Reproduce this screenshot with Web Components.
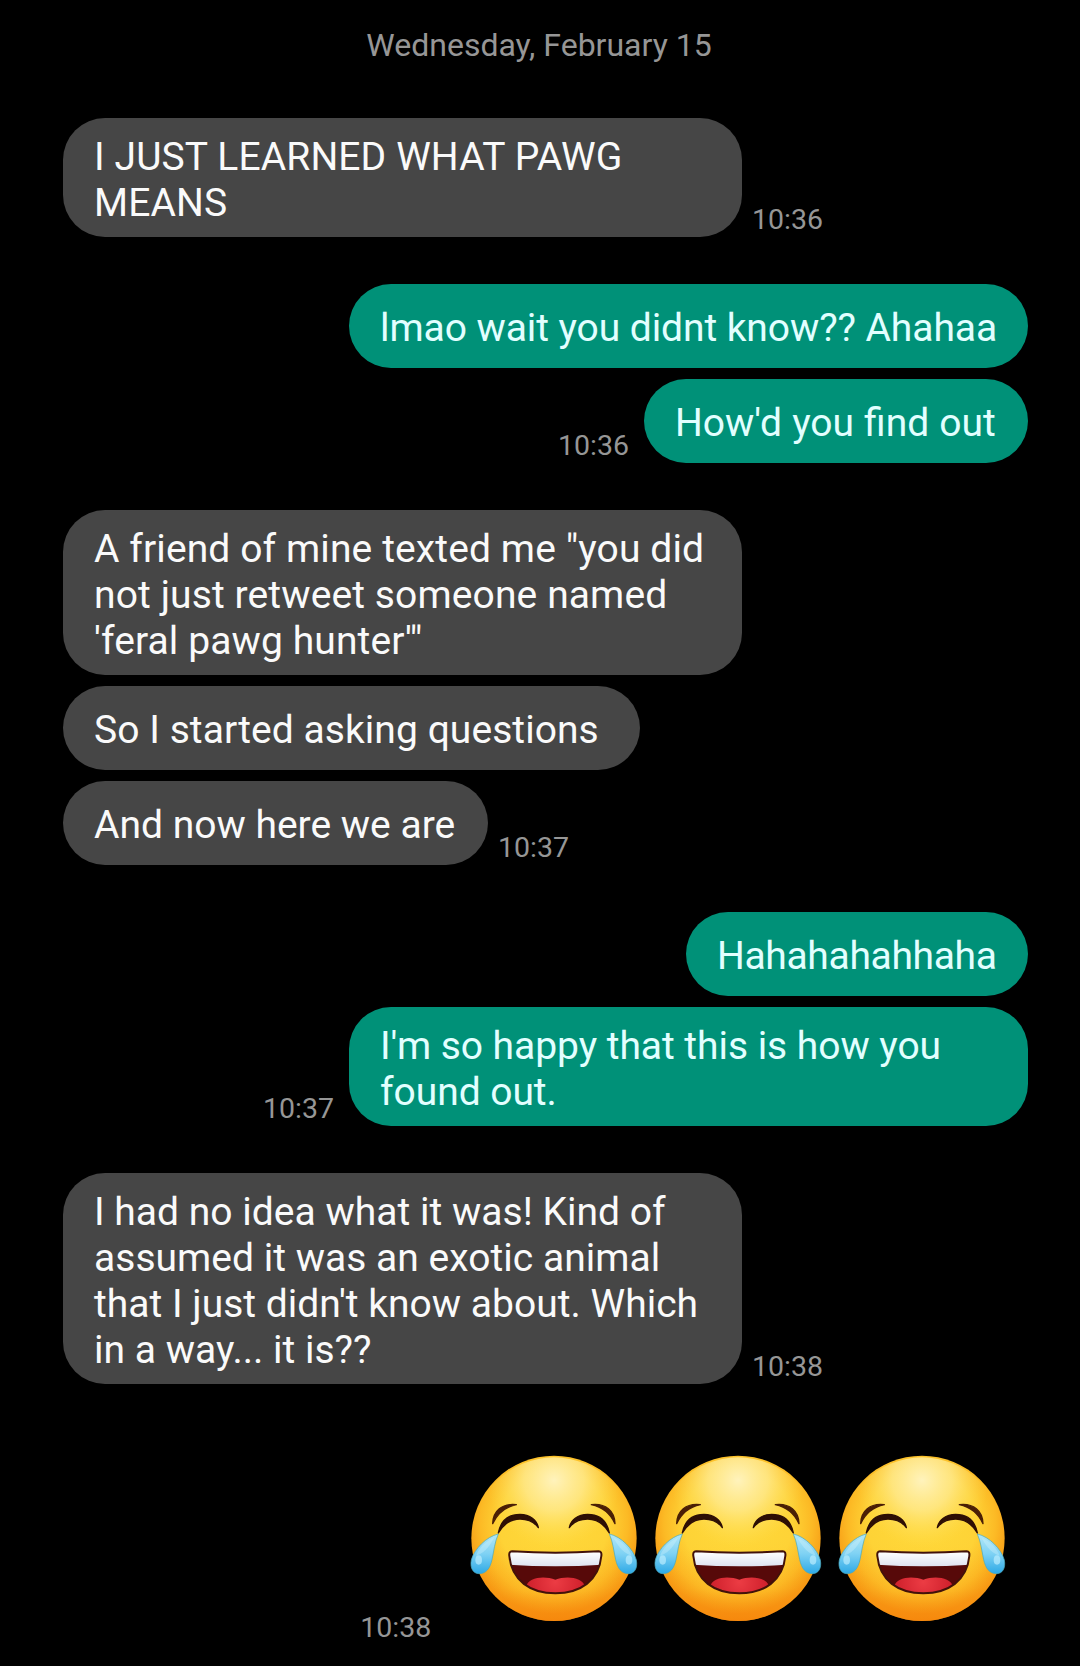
<!DOCTYPE html>
<html lang="en">
<head>
<meta charset="utf-8">
<title>Messages</title>
<style>
    body {
        background: #000;
        font-family: Roboto, "Liberation Sans", sans-serif;
        margin: 0;
    }
</style>
</head>
<body>
<message-thread>
    <date-divider>Wednesday, February 15</date-divider>
    <message-group>
        <message-bubble time="10:36" style="--tracking: .12px">I JUST LEARNED WHAT PAWG MEANS</message-bubble>
    </message-group>
    <message-group sent>
        <message-bubble sent single style="--bubble-width: 679px; --tracking: -.08px">lmao wait you didnt know?? Ahahaa</message-bubble>
        <message-bubble sent single time="10:36" style="--bubble-width: 384px; word-spacing: .4px">How'd you find out</message-bubble>
    </message-group>
    <message-group>
        <message-bubble style="--tracking: .11px">A friend of mine texted me "you did not just retweet someone named 'feral pawg hunter'"</message-bubble>
        <message-bubble single style="--bubble-width: 577px; --tracking: .06px">So I started asking questions</message-bubble>
        <message-bubble single time="10:37" style="--bubble-width: 425px">And now here we are</message-bubble>
    </message-group>
    <message-group sent>
        <message-bubble sent single style="--bubble-width: 342px; --tracking: -.34px">Hahahahahhaha</message-bubble>
        <message-bubble sent time="10:37" style="--tracking: -.05px">I'm so happy that this is how you found out.</message-bubble>
    </message-group>
    <message-group>
        <message-bubble time="10:38" style="--tracking: .02px">I had no idea what it was! Kind of assumed it was an exotic animal that I just didn't know about. Which in a way... it is??</message-bubble>
    </message-group>
    <message-group sent>
        <emoji-message time="10:38"><joy-emoji></joy-emoji><joy-emoji></joy-emoji><joy-emoji></joy-emoji></emoji-message>
    </message-group>
</message-thread>
<script>
class MessageThread extends HTMLElement {
    constructor() {
        super();
        this.attachShadow({ mode: 'open' }).innerHTML = `
            <style>
                :host {
                    box-sizing: border-box;
                    display: flex;
                    flex-direction: column;
                    gap: 47px;
                    height: 1666px;
                    overflow: hidden;
                    padding: 26px 52px 0 63px;
                }
            </style>
            <slot></slot>
        `;
    }
}

class DateDivider extends HTMLElement {
    constructor() {
        super();
        this.attachShadow({ mode: 'open' }).innerHTML = `
            <style>
                :host {
                    color: #969696;
                    display: block;
                    flex: none;
                    font-size: 32px;
                    height: 45px;
                    line-height: 38px;
                    margin-left: -13px;
                }

                .date {
                    text-align: center;
                }
            </style>
            <div class="date"><slot></slot></div>
        `;
    }
}

class MessageGroup extends HTMLElement {
    constructor() {
        super();
        this.attachShadow({ mode: 'open' }).innerHTML = `
            <style>
                :host {
                    align-items: flex-start;
                    display: flex;
                    flex: none;
                    flex-direction: column;
                    gap: 11px;
                }

                :host([sent]) {
                    align-items: flex-end;
                }
            </style>
            <slot></slot>
        `;
    }
}

class MessageBubble extends HTMLElement {
    constructor() {
        super();
        this.attachShadow({ mode: 'open' }).innerHTML = `
            <style>
                :host {
                    align-items: flex-end;
                    display: flex;
                    gap: 10px;
                }

                :host([sent]) {
                    flex-direction: row-reverse;
                    gap: 15px;
                }

                .bubble {
                    background: #464646;
                    border-radius: 42px;
                    box-sizing: border-box;
                    color: #fafafa;
                    font-size: 39px;
                    letter-spacing: var(--tracking, 0);
                    line-height: 46px;
                    max-width: 679px;
                    padding: 16px 31px 11px;
                    width: var(--bubble-width, auto);
                }

                :host([single]) .bubble {
                    padding: 21px 31px 17px;
                    white-space: nowrap;
                }

                :host([sent]) .bubble {
                    background: #009178;
                    color: #e2ffff;
                }

                .time {
                    color: #969696;
                    font-size: 28.5px;
                    line-height: 35px;
                }
            </style>
            <div class="bubble"><slot></slot></div>
            <span class="time"></span>
        `;
    }

    connectedCallback() {
        this.shadowRoot.querySelector('.time').textContent = this.getAttribute('time') || '';
    }
}

class EmojiMessage extends HTMLElement {
    constructor() {
        super();
        this.attachShadow({ mode: 'open' }).innerHTML = `
            <style>
                :host {
                    align-items: flex-end;
                    display: flex;
                    gap: 31px;
                    height: 214px;
                    padding-right: 13.7px;
                }

                .emojis {
                    display: flex;
                    padding-bottom: 23.2px;
                }

                .time {
                    color: #969696;
                    font-size: 28.5px;
                    line-height: 35px;
                }
            </style>
            <span class="time"></span>
            <div class="emojis"><slot></slot></div>
        `;
    }

    connectedCallback() {
        this.shadowRoot.querySelector('.time').textContent = this.getAttribute('time') || '';
    }
}

class JoyEmoji extends HTMLElement {
    constructor() {
        super();
        this.attachShadow({ mode: 'open' }).innerHTML = `
            <style>
                :host {
                    display: block;
                    height: 166.67px;
                    width: 184px;
                }

                svg {
                    display: block;
                    height: 100%;
                    width: 100%;
                }
            </style>
            <svg viewBox="7 44 552 500">
                <defs>
                    <radialGradient id="face" cx="283" cy="250" r="270" gradientUnits="userSpaceOnUse">
                        <stop offset="0" stop-color="#ffd93a"/>
                        <stop offset=".6" stop-color="#fed336"/>
                        <stop offset=".82" stop-color="#fcba25"/>
                        <stop offset="1" stop-color="#f79a14"/>
                    </radialGradient>
                    <linearGradient id="shade" x1="0" y1="300" x2="0" y2="542" gradientUnits="userSpaceOnUse">
                        <stop offset="0" stop-color="#f98a10" stop-opacity="0"/>
                        <stop offset=".6" stop-color="#f98a10" stop-opacity=".06"/>
                        <stop offset="1" stop-color="#f67c08" stop-opacity=".6"/>
                    </linearGradient>
                    <radialGradient id="shine" cx="283" cy="120" r="200" gradientUnits="userSpaceOnUse">
                        <stop offset="0" stop-color="#fff3bc"/>
                        <stop offset=".45" stop-color="#ffeb94" stop-opacity=".75"/>
                        <stop offset="1" stop-color="#ffdc50" stop-opacity="0"/>
                    </radialGradient>
                    <linearGradient id="tear" x1="0" y1="280" x2="0" y2="400" gradientUnits="userSpaceOnUse">
                        <stop offset="0" stop-color="#b4e8f6"/>
                        <stop offset=".5" stop-color="#7fd2f4"/>
                        <stop offset="1" stop-color="#2ea9e6"/>
                    </linearGradient>
                    <linearGradient id="teeth" x1="0" y1="335" x2="0" y2="377" gradientUnits="userSpaceOnUse">
                        <stop offset="0" stop-color="#fff"/>
                        <stop offset="1" stop-color="#dfe3f0"/>
                    </linearGradient>
                    <radialGradient id="tongue" cx="287" cy="425" r="85" gradientUnits="userSpaceOnUse">
                        <stop offset="0" stop-color="#ec3c44"/>
                        <stop offset="1" stop-color="#cf202c"/>
                    </radialGradient>
                    <clipPath id="mouth">
                        <path d="M157 333Q287 341 417 333Q427 333 425 347C418 421 362 459 287 459C212 459 156 421 149 347Q147 333 157 333Z"/>
                    </clipPath>
                    <g id="side">
                        <path d="M99 250C100 212 127 188 170 193C136 200 114 218 99 250Z" fill="#4a1f06" stroke="#4a1f06" stroke-width="4" stroke-linejoin="round"/>
                        <path d="M116 278C124 237 151 222 181 222C211 222 232 240 236 262C222 243 204 236 181 236C152 236 132 251 116 278Z" fill="#2e0f05" stroke="#2e0f05" stroke-width="4" stroke-linejoin="round"/>
                        <path d="M116 281C80 289 44 326 35 359C30 385 42 400 58 400C80 400 91 384 97 358C103 331 105 305 116 281Z" fill="url(#tear)" stroke="#4aa9bd" stroke-opacity=".7" stroke-width="3"/>
                        <path d="M103 292C78 302 56 325 49 346C66 342 88 324 103 292Z" fill="#d5f4fc" opacity=".35"/>
                        <ellipse cx="57" cy="359" rx="10" ry="14" fill="#c2efff" opacity=".65"/>
                    </g>
                </defs>
                <circle cx="283" cy="294" r="248" fill="url(#face)"/>
                <circle cx="283" cy="294" r="248" fill="url(#shade)"/>
                <circle cx="283" cy="294" r="243" fill="url(#shine)"/>
                <use href="#side"/>
                <use href="#side" transform="matrix(-1 0 0 1 565 0)"/>
                <g clip-path="url(#mouth)">
                    <rect x="145" y="325" width="285" height="140" fill="#570909"/>
                    <path d="M145 325H430V373Q287 383 145 373Z" fill="url(#teeth)"/>
                    <path d="M200 438C205 410 255 405 287 418C319 405 369 410 376 438L350 470H220Z" fill="url(#tongue)"/>
                </g>
                <path d="M157 333Q287 341 417 333Q427 333 425 347C418 421 362 459 287 459C212 459 156 421 149 347Q147 333 157 333Z" fill="none" stroke="#42120a" stroke-width="6"/>
            </svg>
        `;
    }
}

customElements.define('message-thread', MessageThread);
customElements.define('date-divider', DateDivider);
customElements.define('message-group', MessageGroup);
customElements.define('message-bubble', MessageBubble);
customElements.define('emoji-message', EmojiMessage);
customElements.define('joy-emoji', JoyEmoji);
</script>
</body>
</html>
